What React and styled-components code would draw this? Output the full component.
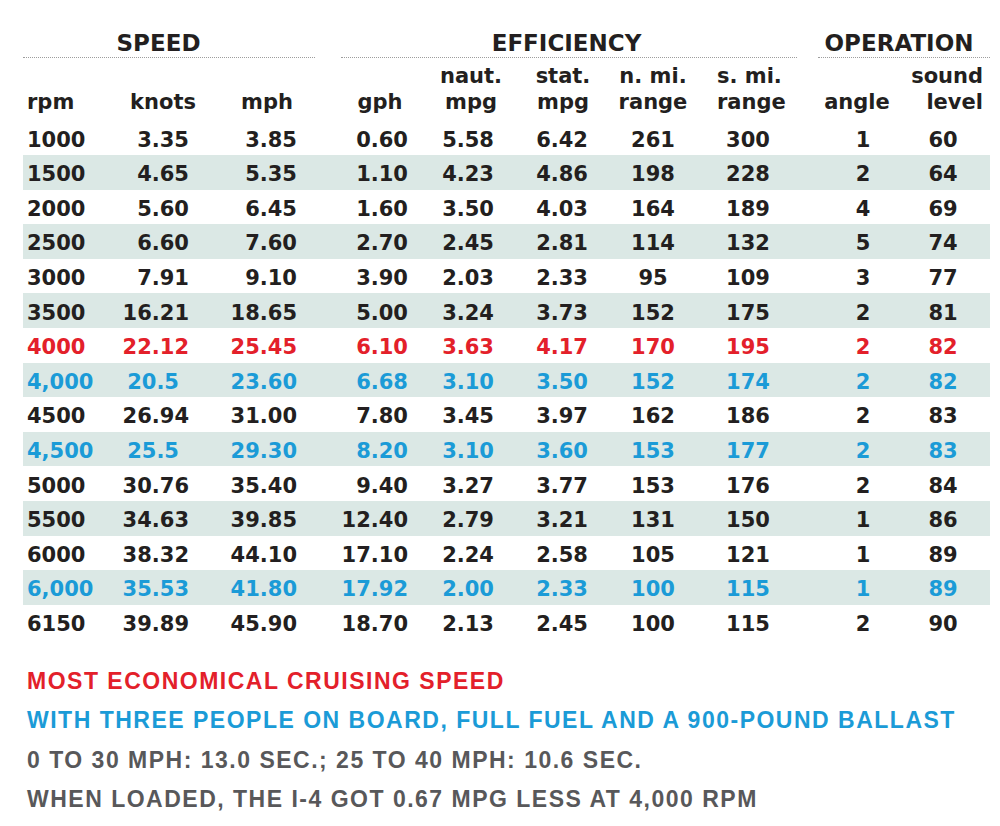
import React from "react";
import styled, { createGlobalStyle } from "styled-components";

const GlobalStyle = createGlobalStyle`
  html, body { margin: 0; padding: 0; background: #ffffff; }
  body { font-family: "DejaVu Sans", "Liberation Sans", sans-serif; }
`;

const INK = "#231f20";
const RED = "#e3202a";
const BLUE = "#1b9bd7";
const GREY = "#58585a";
const SHADE = "#dbe8e5";

const Page = styled.div`
  width: 1000px;
  height: 826px;
  box-sizing: border-box;
  padding: 29px 0 0 23px;
  overflow: hidden;
`;

const Sheet = styled.div`
  width: 967px;
`;

const SectionBar = styled.div`
  display: grid;
  grid-template-columns: 318px 477px 172px;
`;

const SectionGroup = styled.div`
  padding-right: ${(p) => p.$gap || 0}px;
`;

const SectionTitle = styled.div`
  font-family: "DejaVu Sans", sans-serif;
  font-weight: 700;
  font-size: 23px;
  line-height: 28px;
  height: 28px;
  color: ${INK};
  text-align: center;
  padding-right: ${(p) => p.$shift}px;
  border-bottom: 1px dotted #9d9d9d;
`;

const Grid = styled.div`
  display: grid;
  grid-template-columns: ${(p) => p.$cols};
  align-items: center;
  box-sizing: border-box;
  height: ${(p) => p.$h}px;
`;

const HeadRow = styled(Grid)`
  align-items: end;
  padding-top: 5px;
  margin-bottom: 5.4px;
`;

const HeadCell = styled.div`
  display: flex;
  flex-direction: column;
  align-items: ${(p) =>
    p.$align === "left" ? "flex-start" : p.$align === "right" ? "flex-end" : "center"};
  padding-left: ${(p) => p.$pl || 0}px;
  padding-right: ${(p) => p.$pr || 0}px;
  font-weight: 700;
  font-size: 21px;
  line-height: 26px;
  color: ${INK};
`;

const DataRow = styled(Grid)`
  background: ${(p) => (p.$shaded ? SHADE : "transparent")};
  color: ${(p) => p.$color};
  padding-top: 5px;
`;

const DataCell = styled.div`
  text-align: ${(p) => p.$align};
  padding-left: ${(p) => p.$pl || 0}px;
  padding-right: ${(p) => p.$pr || 0}px;
  font-weight: 700;
  font-size: 21px;
  line-height: 21px;
  white-space: nowrap;
`;

const Notes = styled.div`
  margin-top: 22.5px;
  padding-left: 4px;
`;

const Note = styled.div`
  font-family: "Liberation Sans", Arial, sans-serif;
  font-weight: 700;
  font-size: 23px;
  line-height: 39.5px;
  letter-spacing: 1.5px;
  color: ${(p) => p.$color};
  white-space: nowrap;
`;

const columns = [
  { w: 95, head: ["rpm"], hAlign: "left", hpl: 4, dAlign: "left", dpl: 4 },
  { w: 87, head: ["knots"], hAlign: "center", hpl: 3, dAlign: "right", dpr: 16 },
  { w: 115, head: ["mph"], hAlign: "center", hpl: 9, dAlign: "right", dpr: 23 },
  { w: 100, head: ["gph"], hAlign: "center", hpl: 20, dAlign: "right", dpr: 12 },
  { w: 95, head: ["naut.", "mpg"], hAlign: "center", hpl: 7, dAlign: "right", dpr: 21 },
  { w: 93, head: ["stat.", "mpg"], hAlign: "center", hpl: 3, dAlign: "right", dpr: 20 },
  { w: 92, head: ["n. mi.", "range"], hAlign: "center", hpr: 2, dAlign: "center", dpr: 2 },
  { w: 100, head: ["s. mi.", "range"], hAlign: "left", hpl: 17, dAlign: "center", dpr: 4 },
  { w: 105, head: ["angle"], hAlign: "center", hpl: 9, dAlign: "center", dpl: 21 },
  { w: 85, head: ["sound", "level"], hAlign: "right", hpr: 7, dAlign: "center", dpr: 9 },
];

const template = columns.map((c) => `${c.w}px`).join(" ");

const rows = [
  { t: "ink", v: ["1000", "3.35", "3.85", "0.60", "5.58", "6.42", "261", "300", "1", "60"] },
  { t: "ink", v: ["1500", "4.65", "5.35", "1.10", "4.23", "4.86", "198", "228", "2", "64"] },
  { t: "ink", v: ["2000", "5.60", "6.45", "1.60", "3.50", "4.03", "164", "189", "4", "69"] },
  { t: "ink", v: ["2500", "6.60", "7.60", "2.70", "2.45", "2.81", "114", "132", "5", "74"] },
  { t: "ink", v: ["3000", "7.91", "9.10", "3.90", "2.03", "2.33", "95", "109", "3", "77"] },
  { t: "ink", v: ["3500", "16.21", "18.65", "5.00", "3.24", "3.73", "152", "175", "2", "81"] },
  { t: "red", v: ["4000", "22.12", "25.45", "6.10", "3.63", "4.17", "170", "195", "2", "82"] },
  { t: "blue", v: ["4,000", "20.5", "23.60", "6.68", "3.10", "3.50", "152", "174", "2", "82"] },
  { t: "ink", v: ["4500", "26.94", "31.00", "7.80", "3.45", "3.97", "162", "186", "2", "83"] },
  { t: "blue", v: ["4,500", "25.5", "29.30", "8.20", "3.10", "3.60", "153", "177", "2", "83"] },
  { t: "ink", v: ["5000", "30.76", "35.40", "9.40", "3.27", "3.77", "153", "176", "2", "84"] },
  { t: "ink", v: ["5500", "34.63", "39.85", "12.40", "2.79", "3.21", "131", "150", "1", "86"] },
  { t: "ink", v: ["6000", "38.32", "44.10", "17.10", "2.24", "2.58", "105", "121", "1", "89"] },
  { t: "blue", v: ["6,000", "35.53", "41.80", "17.92", "2.00", "2.33", "100", "115", "1", "89"] },
  { t: "ink", v: ["6150", "39.89", "45.90", "18.70", "2.13", "2.45", "100", "115", "2", "90"] },
];

const tone = { ink: INK, red: RED, blue: BLUE };

const notes = [
  { c: RED, text: "MOST ECONOMICAL CRUISING SPEED" },
  { c: BLUE, text: "WITH THREE PEOPLE ON BOARD, FULL FUEL AND A 900-POUND BALLAST" },
  { c: GREY, text: "0 TO 30 MPH: 13.0 SEC.; 25 TO 40 MPH: 10.6 SEC." },
  { c: GREY, text: "WHEN LOADED, THE I-4 GOT 0.67 MPG LESS AT 4,000 RPM" },
];

// short one-decimal knot readings sit a little left of the column edge
const knotPad = (val, base) => (/^\d+\.\d$/.test(val) ? base + 10 : base);

export default function App() {
  return (
    <>
      <GlobalStyle />
      <Page>
        <Sheet>
          <SectionBar>
            <SectionGroup $gap={26}>
              <SectionTitle $shift={21}>SPEED</SectionTitle>
            </SectionGroup>
            <SectionGroup $gap={21}>
              <SectionTitle $shift={5}>EFFICIENCY</SectionTitle>
            </SectionGroup>
            <SectionGroup>
              <SectionTitle $shift={10}>OPERATION</SectionTitle>
            </SectionGroup>
          </SectionBar>

          <HeadRow $cols={template} $h={57}>
            {columns.map((c, i) => (
              <HeadCell key={i} $align={c.hAlign} $pl={c.hpl} $pr={c.hpr}>
                {c.head.map((line) => (
                  <span key={line}>{line}</span>
                ))}
              </HeadCell>
            ))}
          </HeadRow>

          {rows.map((r, ri) => (
            <DataRow
              key={ri}
              $cols={template}
              $h={34.6}
              $shaded={ri % 2 === 1}
              $color={tone[r.t]}
            >
              {r.v.map((val, ci) => {
                const c = columns[ci];
                return (
                  <DataCell
                    key={ci}
                    $align={c.dAlign}
                    $pl={c.dpl}
                    $pr={ci === 1 ? knotPad(val, c.dpr) : c.dpr}
                  >
                    {val}
                  </DataCell>
                );
              })}
            </DataRow>
          ))}

          <Notes>
            {notes.map((n) => (
              <Note key={n.text} $color={n.c}>
                {n.text}
              </Note>
            ))}
          </Notes>
        </Sheet>
      </Page>
    </>
  );
}
